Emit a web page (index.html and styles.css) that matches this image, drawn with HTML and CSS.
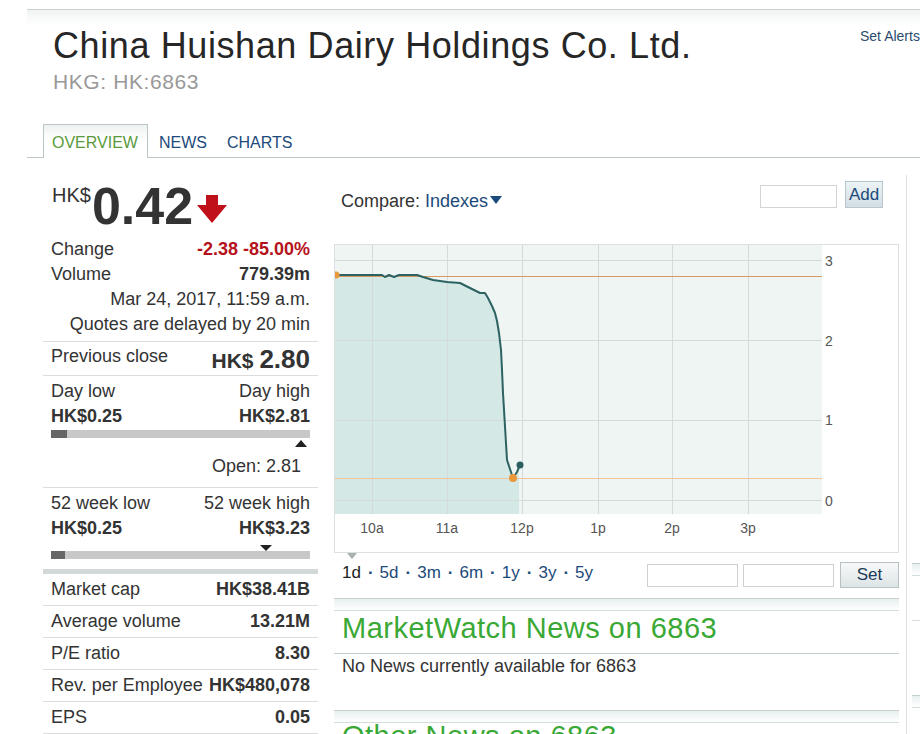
FILE: index.html
```html
<!DOCTYPE html>
<html lang="en">
<head>
<meta charset="utf-8">
<title>China Huishan Dairy Holdings Co. Ltd.</title>
<link rel="stylesheet" href="styles.css">
</head>
<body>
<div class="page">
  <div class="topbar"></div>
  <header class="head">
    <div class="titles">
      <h1>China Huishan Dairy Holdings Co. Ltd.</h1>
      <div class="sym">HKG: HK:6863</div>
    </div>
    <a class="alerts" href="#">Set Alerts</a>
  </header>
  <nav class="tabs">
    <a class="tab active" href="#">OVERVIEW</a>
    <a class="tab" href="#">NEWS</a>
    <a class="tab" href="#">CHARTS</a>
  </nav>
  <main class="main">
    <section class="left">
      <div class="price">
        <span class="cur">HK$</span>
        <span class="big">0.42</span>
        <svg class="arrow" width="30" height="28" viewBox="0 0 30 28"><path d="M9 0 H21 V10 H30 L15 28 L0 10 H9 Z" fill="#c0101a"/></svg>
      </div>
      <div class="quote">
        <div class="qrow"><span>Change</span><b class="neg">-2.38 -85.00%</b></div>
        <div class="qrow"><span>Volume</span><b>779.39m</b></div>
        <div class="qrow end"><span>Mar 24, 2017, 11:59 a.m.</span></div>
        <div class="qrow end"><span>Quotes are delayed by 20 min</span></div>
      </div>
      <div class="prev">
        <span class="plabel">Previous close</span>
        <b class="pval">HK$ <span class="n">2.80</span></b>
      </div>
      <div class="range">
        <div class="qrow"><span>Day low</span><span>Day high</span></div>
        <div class="qrow"><b>HK$0.25</b><b>HK$2.81</b></div>
        <div class="bar"><span class="fill" style="width:16px"></span></div>
        <div class="tick-row right-tick"><span class="tri-up"></span></div>
        <div class="open">Open: 2.81</div>
      </div>
      <div class="range w52">
        <div class="qrow"><span>52 week low</span><span>52 week high</span></div>
        <div class="qrow"><b>HK$0.25</b><b>HK$3.23</b></div>
        <div class="tick-row"><span class="tri-down" style="margin-left:209px"></span></div>
        <div class="bar"><span class="fill" style="width:14px"></span></div>
      </div>
      <div class="kd"><span>Market cap</span><b>HK$38.41B</b></div>
      <div class="kd"><span>Average volume</span><b>13.21M</b></div>
      <div class="kd"><span>P/E ratio</span><b>8.30</b></div>
      <div class="kd"><span>Rev. per Employee</span><b>HK$480,078</b></div>
      <div class="kd"><span>EPS</span><b>0.05</b></div>
    </section>

    <section class="center">
      <div class="compare">
        <div class="cmp-label">Compare: <a href="#">Indexes</a><span class="caret"></span></div>
        <input class="cmp-input" type="text">
        <button class="btn-add">Add</button>
      </div>
      <div class="chart">
        <svg width="563" height="307" viewBox="0 0 563 307">
          <rect x="0" y="0" width="487" height="269" fill="#eef5f2"/>
          <path d="M0 269 L0 30 L47 30 L50 32 L54 30 L59 32 L64 30 L82 30 L88 32 L98 35 L112 37 L125 38 L135 43 L145 48 L150 48 L153 53 L157 61 L160 68 L162 76 L164 88 L166 105 L167 125 L168 148 L172 215 L177 230 L178 233 L182 227 L184 222 L184 269 Z" fill="#d4e8e6"/>
          <g stroke="#d2dbd9" stroke-width="1">
            <line x1="0" y1="15.5" x2="487" y2="15.5"/>
            <line x1="0" y1="95.5" x2="487" y2="95.5"/>
            <line x1="0" y1="175.5" x2="487" y2="175.5"/>
            <line x1="0" y1="255.5" x2="487" y2="255.5"/>
            <line x1="37.5" y1="0" x2="37.5" y2="269"/>
            <line x1="112.5" y1="0" x2="112.5" y2="269"/>
            <line x1="187.5" y1="0" x2="187.5" y2="269"/>
            <line x1="263.5" y1="0" x2="263.5" y2="269"/>
            <line x1="337.5" y1="0" x2="337.5" y2="269"/>
            <line x1="413.5" y1="0" x2="413.5" y2="269"/>
          </g>
          <line x1="0" y1="31.5" x2="487" y2="31.5" stroke="#d99a62" stroke-width="1"/>
          <line x1="0" y1="233.5" x2="487" y2="233.5" stroke="#f3c595" stroke-width="1"/>
          <path d="M0 30 L47 30 L50 32 L54 30 L59 32 L64 30 L82 30 L88 32 L98 35 L112 37 L125 38 L135 43 L145 48 L150 48 L153 53 L157 61 L160 68 L162 76 L164 88 L166 105 L167 125 L168 148 L172 215 L177 230 L178 233 L182 227 L185 220" fill="none" stroke="#2d6262" stroke-width="2" stroke-linejoin="round"/>
          <circle cx="1" cy="30" r="3.5" fill="#e59a3c"/>
          <circle cx="178" cy="233" r="4" fill="#e8983a"/>
          <circle cx="185" cy="220" r="3.5" fill="#2a5f60"/>
          <g font-family="Liberation Sans, Arial, sans-serif" font-size="14" fill="#555">
            <text x="490" y="21">3</text>
            <text x="490" y="101">2</text>
            <text x="490" y="180">1</text>
            <text x="490" y="261">0</text>
          </g>
          <g font-family="Liberation Sans, Arial, sans-serif" font-size="14" fill="#555" text-anchor="middle">
            <text x="37" y="288">10a</text>
            <text x="112" y="288">11a</text>
            <text x="187" y="288">12p</text>
            <text x="263" y="288">1p</text>
            <text x="337" y="288">2p</text>
            <text x="413" y="288">3p</text>
          </g>
        </svg>
        <span class="marker"></span>
      </div>
      <div class="ranges">
        <div class="periods"><span class="sel">1d</span><span class="dot">·</span><a href="#">5d</a><span class="dot">·</span><a href="#">3m</a><span class="dot">·</span><a href="#">6m</a><span class="dot">·</span><a href="#">1y</a><span class="dot">·</span><a href="#">3y</a><span class="dot">·</span><a href="#">5y</a></div>
        <input class="rinput first" type="text">
        <input class="rinput second" type="text">
        <button class="btn-set">Set</button>
      </div>
      <div class="sep"></div>
      <h2 class="news-h">MarketWatch News on 6863</h2>
      <p class="news-p">No News currently available for 6863</p>
      <div class="sep"></div>
      <h2 class="news-h other">Other News on 6863</h2>
    </section>

    <aside class="right">
      <div class="sep"></div>
      <div class="rbox"></div>
      <div class="rbox tall"></div>
      <div class="sep"></div>
    </aside>
  </main>
</div>
</body>
</html>
```

FILE: styles.css
```css
* { box-sizing: border-box; }
html, body { margin: 0; padding: 0; }
body {
  font-family: "Liberation Sans", Arial, sans-serif;
  color: #333;
  background: #fff;
  width: 920px;
  height: 734px;
  overflow: hidden;
}
a { text-decoration: none; }

.page { margin: 9px 0 0 27px; width: 900px; }

.topbar {
  height: 17px;
  border-top: 1px solid #c9d0d0;
  background: linear-gradient(#f1f4f4, #fff);
}

.head { display: flex; align-items: flex-start; }
.titles { width: 833px; padding-left: 26px; }
h1 {
  margin: 0;
  font-size: 36px;
  font-weight: normal;
  line-height: 40px;
  letter-spacing: 0.6px;
  color: #262626;
}
.sym { margin-top: 4px; font-size: 21px; line-height: 24px; letter-spacing: 0.6px; color: #999; }
.alerts {
  margin-top: 2px;
  font-size: 14px;
  line-height: 16px;
  color: #2b4c6e;
  white-space: nowrap;
}

.tabs {
  display: flex;
  align-items: flex-end;
  margin-top: 30px;
  padding-left: 16px;
  height: 34px;
  border-bottom: 1px solid #bcc6c8;
}
.tab {
  display: block;
  font-size: 16px;
  line-height: 33px;
  height: 33px;
  padding: 2px 9px 0 11px;
  color: #1c4a7a;
}
.tab.active {
  color: #5a9a3c;
  border: 1px solid #bcc6c8;
  border-bottom: 0;
  padding: 2px 9px 0 8px;
  margin-bottom: -1px;
  height: 34px;
  line-height: 31px;
  background: linear-gradient(#eef1f1, #fff 45%);
}

.main { display: flex; align-items: flex-start; }
.left { width: 275px; margin-left: 16px; font-size: 18px; }
.center {
  width: 573px;
  margin-left: 16px;
  margin-top: 17px;
  padding-right: 7px;
  border-right: 1px solid #dde2e2;
}
.right { flex: 1; margin-left: 5px; padding-top: 405px; }

/* left column */
.price {
  display: flex;
  align-items: flex-start;
  height: 79px;
  padding: 22px 8px 0 9px;
}
.cur { font-size: 20px; line-height: 20px; margin-top: 5px; }
.big {
  font-size: 52px;
  line-height: 52px;
  font-weight: bold;
  letter-spacing: 0;
  color: #333;
  margin-left: 1px;
}
.arrow { margin: 15px 0 0 4px; display: block; }

.quote { padding: 0 8px 4px; border-bottom: 1px solid #dcdcdc; }
.qrow {
  display: flex;
  justify-content: space-between;
  line-height: 25px;
  height: 25px;
  white-space: nowrap;
}
.qrow.end { justify-content: flex-end; }
b { font-weight: bold; color: #333; }
b.neg { color: #b5121b; }

.prev {
  display: flex;
  justify-content: space-between;
  align-items: flex-start;
  height: 34px;
  padding: 1px 8px 0;
  border-bottom: 1px solid #dcdcdc;
}
.plabel { display: block; line-height: 25px; margin-top: 1px; }
.pval { display: block; font-size: 21px; line-height: 26px; margin-top: 3px; }
.pval .n { font-size: 26px; }

.range {
  height: 112px;
  padding: 3px 8px 0;
  border-bottom: 1px solid #dcdcdc;
}
.range.w52 { height: 86px; border-bottom: 5px solid #d3d8d8; }
.bar { height: 8px; margin-top: 1px; background: #c8c8c8; }
.w52 .bar { margin-top: 0; }
.fill { display: block; height: 100%; background: #666; }
.tick-row { display: flex; }
.right-tick { justify-content: flex-end; margin-top: 2px; height: 7px; }
.w52 .tick-row { margin-top: 4px; height: 6px; }
.tri-up {
  width: 0; height: 0;
  margin-right: 3px;
  border-left: 6px solid transparent;
  border-right: 6px solid transparent;
  border-bottom: 7px solid #222;
}
.tri-down {
  width: 0; height: 0;
  border-left: 6px solid transparent;
  border-right: 6px solid transparent;
  border-top: 6px solid #222;
}
.open { margin-top: 7px; line-height: 25px; text-align: right; padding-right: 9px; }

.kd {
  display: flex;
  justify-content: space-between;
  height: 32px;
  line-height: 31px;
  padding: 0 8px;
  border-bottom: 1px solid #dcdcdc;
  white-space: nowrap;
}

/* center column */
.compare { display: flex; align-items: flex-start; height: 69px; padding-top: 6px; }
.cmp-label { margin: 9px 0 0 7px; font-size: 18px; line-height: 22px; color: #333; white-space: nowrap; }
.cmp-label a { color: #1c4a7a; }
.caret {
  display: inline-block;
  width: 0; height: 0;
  margin-left: 2px;
  vertical-align: 3px;
  border-left: 6.5px solid transparent;
  border-right: 6.5px solid transparent;
  border-top: 8px solid #1c4a7a;
}
.cmp-input {
  margin: 4px 0 0 auto;
  width: 77px;
  height: 23px;
  border: 1px solid #d4d4d4;
  background: #fff;
}
.btn-add {
  margin: 0 16px 0 8px;
  width: 38px;
  height: 27px;
  padding: 0;
  border: 1px solid #b9c6cc;
  background: linear-gradient(#edf3f6, #d2dee4);
  font-family: "Liberation Sans", Arial, sans-serif;
  font-size: 17px;
  color: #1c4a7a;
}

.chart { position: relative; height: 309px; border: 1px solid #dde0e0; }
.chart svg { display: block; }
.marker {
  position: absolute;
  left: 12px;
  bottom: -7px;
  width: 0; height: 0;
  border-left: 5px solid transparent;
  border-right: 5px solid transparent;
  border-top: 6px solid #a9b0b0;
}

.ranges { display: flex; align-items: flex-start; padding: 9px 0 10px; }
.periods { margin-left: 8px; margin-top: 1px; font-size: 17px; line-height: 20px; color: #1c4a7a; white-space: nowrap; }
.periods a { color: #1c4a7a; }
.periods .sel { color: #222; }
.periods .dot { padding: 0 6px 0 7px; font-weight: bold; color: #1c4a7a; }
.rinput { margin-top: 2px; width: 91px; height: 23px; border: 1px solid #d0d0d0; background: #fff; }
.rinput.first { margin-left: auto; }
.rinput.second { margin-left: 5px; }
.btn-set {
  margin-left: 6px;
  width: 59px;
  height: 26px;
  padding: 0;
  border: 1px solid #b8c2c4;
  background: linear-gradient(#f7f9f9, #dde4e5);
  font-family: "Liberation Sans", Arial, sans-serif;
  font-size: 17px;
  color: #1c3a5a;
}

.sep {
  height: 13px;
  border-top: 1px solid #c4cfcf;
  border-bottom: 1px solid #d3dcdc;
  background: linear-gradient(#e9efef, #fff);
}
.news-h {
  margin: 0;
  padding: 0 8px 8px;
  font-size: 29px;
  font-weight: normal;
  line-height: 34px;
  letter-spacing: 0.5px;
  color: #3aa835;
  border-bottom: 1px solid #c4cfcf;
  white-space: nowrap;
}
.news-h.other { margin-top: -4px; }
.news-p { margin: 0; padding: 0 8px; height: 56px; font-size: 18px; line-height: 24px; color: #333; }

/* right column */
.rbox { height: 45px; border-bottom: 1px solid #d8dede; }
.rbox.tall { height: 74px; border-bottom: 0; }
```
